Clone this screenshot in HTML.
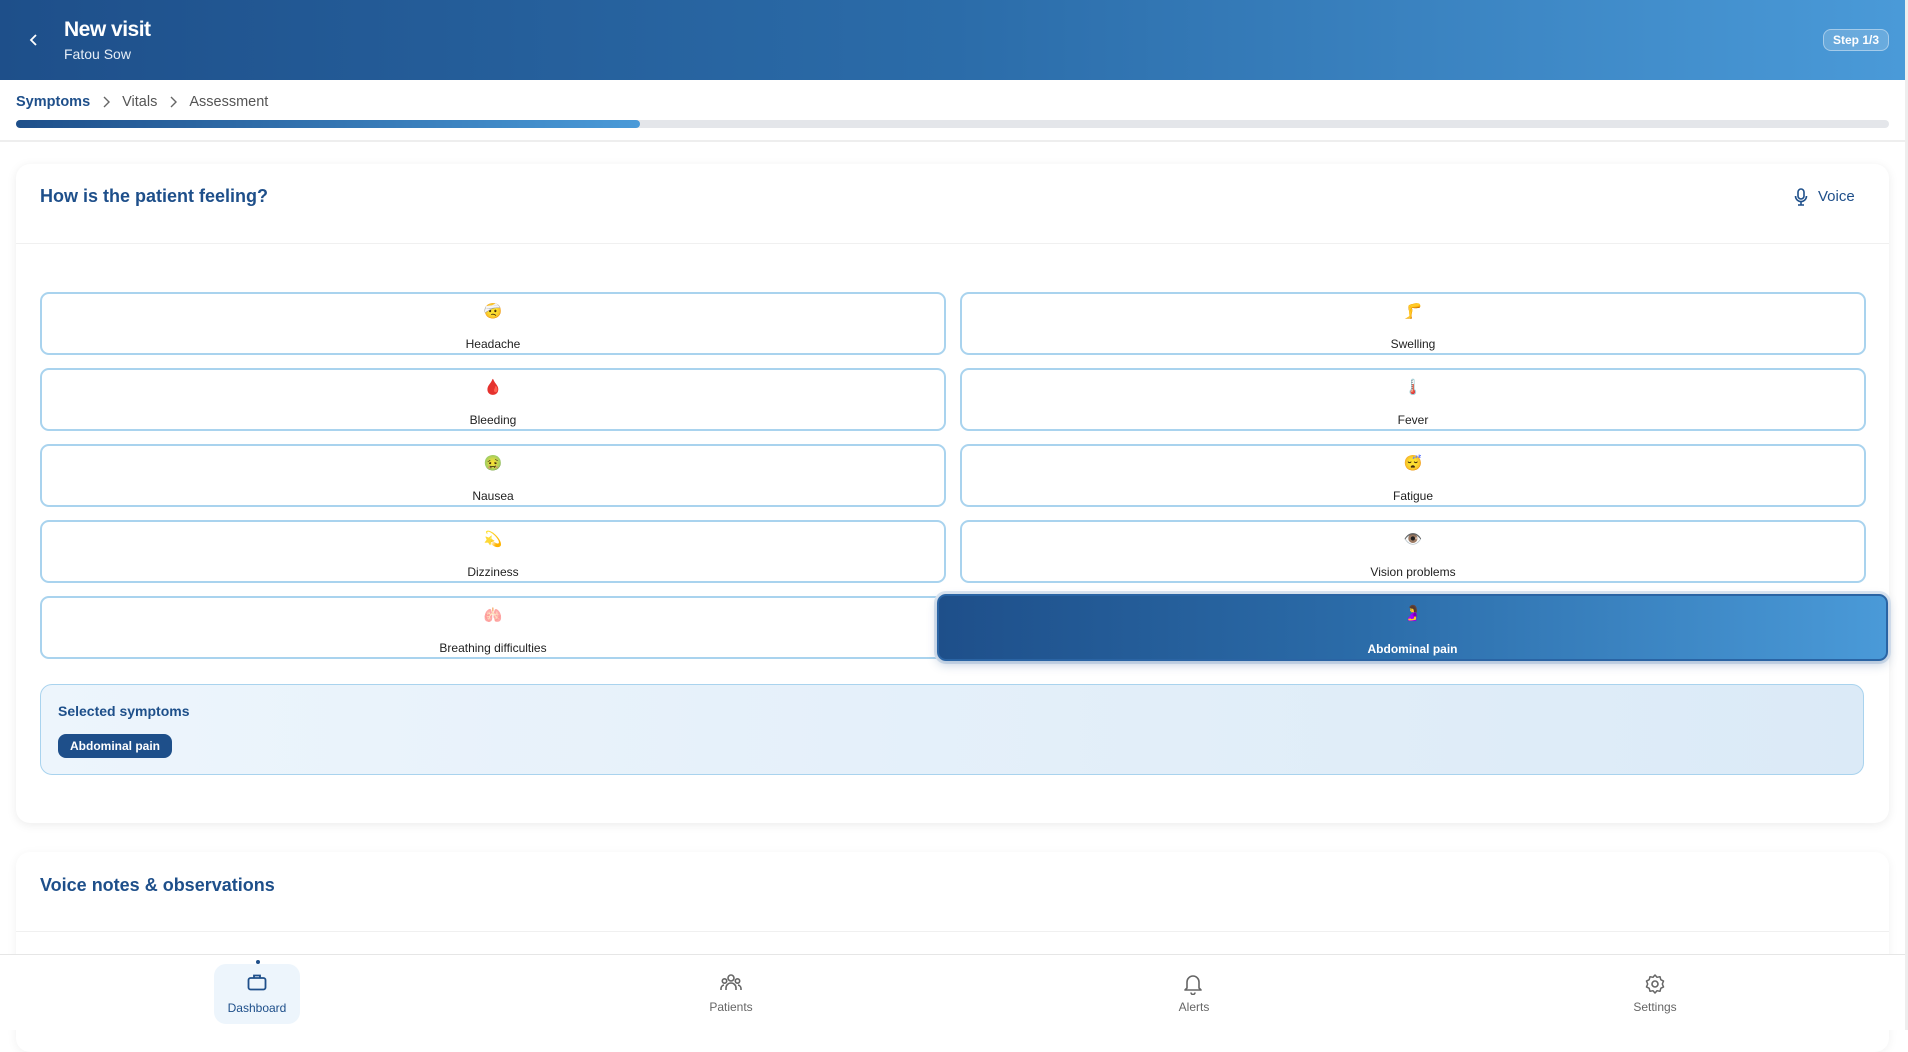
<!DOCTYPE html>
<html><head><meta charset="utf-8"><style>
*{box-sizing:border-box;margin:0;padding:0}
body{width:1908px;height:1030px;overflow:hidden;background:#fff;font-family:"Liberation Sans",sans-serif;position:relative}
.hdr{position:absolute;left:0;top:0;width:1905px;height:80px;background:linear-gradient(90deg,#1e4f8a,#2b6ca9 50%,#4a9ad8)}
.hdr .t{position:absolute;left:64px;top:18px;color:#fff;font-size:21px;font-weight:bold;letter-spacing:-0.5px}
.hdr .s{position:absolute;left:64px;top:46px;color:#e6eef7;font-size:14px}
.step{position:absolute;left:1823px;top:29px;width:66px;height:22px;border:1px solid rgba(255,255,255,.4);background:rgba(255,255,255,.18);border-radius:8px;color:#fff;font-size:12px;font-weight:bold;text-align:center;line-height:20px}
.bc{position:absolute;left:16px;top:94px;font-size:14.5px;color:#555;display:flex;align-items:center}
.bc b{color:#1e4f8a}
.bc svg{margin:0 12px 0 12px}
.pb{position:absolute;left:16px;top:120px;width:1873px;height:8px;border-radius:4px;background:#e4e6ea}
.pb div{width:624px;height:8px;border-radius:4px;background:linear-gradient(90deg,#1e4f8a,#4a9ad8)}
.sep{position:absolute;left:0;top:140px;width:1905px;height:2px;background:#eee}
.card{position:absolute;left:16px;top:164px;width:1873px;height:659px;background:#fff;border-radius:14px;box-shadow:0 2px 10px rgba(0,0,0,.08)}
.h2{position:absolute;font-size:18px;font-weight:bold;color:#1e4f8a}
.div{position:absolute;left:0;width:100%;height:1px;background:#f0f0f0}
.sym{position:absolute;width:906px;height:63px;border:2px solid #a9d3ee;border-radius:9px;background:#fff;text-align:center}
.sym .e{position:absolute;top:8px;left:0;width:100%;font-size:15px;line-height:20px}
.sym .l{position:absolute;top:43px;left:0;width:100%;font-size:12px;color:#222}
.sel{background:linear-gradient(90deg,#1e4f8a,#2b6ca9 45%,#4a9ad8);border-color:#2a64a4;box-shadow:0 4px 10px rgba(30,79,138,.25),0 0 0 3px #dde7f2}
.sel .l{color:#fff;font-weight:bold}
.panel{position:absolute;left:24px;top:520px;width:1824px;height:91px;border:1px solid #a9d3ee;border-radius:12px;background:linear-gradient(90deg,#edf5fc,#dbeaf7)}
.chip{position:absolute;left:17px;top:49px;width:114px;height:24px;border-radius:8px;background:#1e4f8a;color:#fff;font-size:12px;font-weight:bold;text-align:center;line-height:24px}
.card2{position:absolute;left:16px;top:852px;width:1873px;height:200px;background:#fff;border-radius:14px;box-shadow:0 2px 10px rgba(0,0,0,.06)}
.nav{position:absolute;left:0;top:954px;width:1905px;height:76px;background:#fff;border-top:1px solid #e6e6e6}
.ni{position:absolute;top:0;width:90px;text-align:center;font-size:12px;color:#666}
.ni svg{position:absolute;left:34px;top:18px}
.ni .lb{position:absolute;top:45px;left:0;width:100%}
</style></head><body>
<div class="hdr">
<svg style="position:absolute;left:28px;top:33px" width="12" height="14" viewBox="0 0 12 14"><path d="M8 2L3 7l5 5" stroke="#fff" stroke-width="1.8" fill="none"/></svg>
<div class="t">New visit</div><div class="s">Fatou Sow</div>
<div class="step">Step 1/3</div>
</div>
<div class="bc"><b>Symptoms</b><svg width="8" height="12" viewBox="0 0 8 12"><path d="M2 1l5 5-5 5" stroke="#666" stroke-width="1.4" fill="none"/></svg>Vitals<svg width="8" height="12" viewBox="0 0 8 12"><path d="M2 1l5 5-5 5" stroke="#666" stroke-width="1.4" fill="none"/></svg>Assessment</div>
<div class="pb"><div></div></div>
<div class="sep"></div>
<div class="card">
<div class="h2" style="left:24px;top:22px">How is the patient feeling?</div>
<svg style="position:absolute;left:1778px;top:24px" width="14" height="18" viewBox="0 0 14 18"><rect x="4" y="1" width="6" height="10" rx="3" stroke="#1e4f8a" stroke-width="1.6" fill="none"/><path d="M1.5 8a5.5 5.5 0 0011 0M7 13.5V17M4 17h6" stroke="#1e4f8a" stroke-width="1.6" fill="none"/></svg>
<div style="position:absolute;left:1802px;top:24px;font-size:15px;color:#1e4f8a">Voice</div>
<div class="div" style="top:79px"></div>
<div class="sym" style="left:24px;top:128px"><div class="e">🤕</div><div class="l">Headache</div></div>
<div class="sym" style="left:944px;top:128px"><div class="e">🦵</div><div class="l">Swelling</div></div>
<div class="sym" style="left:24px;top:204px"><div class="e">🩸</div><div class="l">Bleeding</div></div>
<div class="sym" style="left:944px;top:204px"><div class="e">🌡️</div><div class="l">Fever</div></div>
<div class="sym" style="left:24px;top:280px"><div class="e">🤢</div><div class="l">Nausea</div></div>
<div class="sym" style="left:944px;top:280px"><div class="e">😴</div><div class="l">Fatigue</div></div>
<div class="sym" style="left:24px;top:356px"><div class="e">💫</div><div class="l">Dizziness</div></div>
<div class="sym" style="left:944px;top:356px"><div class="e">👁️</div><div class="l">Vision problems</div></div>
<div class="sym" style="left:24px;top:432px"><div class="e">🫁</div><div class="l">Breathing difficulties</div></div>
<div class="sym sel" style="left:921px;top:430px;width:951px;height:67px"><div class="e" style="top:8px">🤰</div><div class="l" style="top:46px">Abdominal pain</div></div>
<div class="panel">
<div style="position:absolute;left:17px;top:18px;font-size:14px;font-weight:bold;color:#1e4f8a">Selected symptoms</div>
<div class="chip">Abdominal pain</div>
</div>
</div>
<div class="card2">
<div class="h2" style="left:24px;top:23px">Voice notes &amp; observations</div>
<div class="div" style="top:79px"></div>
</div>
<div class="nav">
<div style="position:absolute;left:256px;top:5px;width:4px;height:4px;border-radius:2px;background:#1e4f8a"></div>
<div class="ni" style="left:214px;top:9px;height:60px;width:86px;background:#edf5fc;border-radius:12px;color:#1e4f8a"><svg style="left:33px;top:9px" width="20" height="18" viewBox="0 0 20 18"><rect x="1.5" y="5" width="17" height="11.5" rx="2" stroke="#1e4f8a" stroke-width="1.8" fill="none"/><path d="M7 5V2.5h6V5" stroke="#1e4f8a" stroke-width="1.8" fill="none"/></svg><div class="lb" style="top:37px">Dashboard</div></div>
<div class="ni" style="left:686px"><svg width="22" height="20" viewBox="0 0 22 20"><circle cx="11" cy="5" r="3" stroke="#666" stroke-width="1.6" fill="none"/><circle cx="4.5" cy="8" r="2.2" stroke="#666" stroke-width="1.6" fill="none"/><circle cx="17.5" cy="8" r="2.2" stroke="#666" stroke-width="1.6" fill="none"/><path d="M6 17v-2a5 5 0 0110 0v2M1 17v-1.5a3.5 3.5 0 013-3.4M21 17v-1.5a3.5 3.5 0 00-3-3.4" stroke="#666" stroke-width="1.6" fill="none"/></svg><div class="lb">Patients</div></div>
<div class="ni" style="left:1149px"><svg width="20" height="22" viewBox="0 0 20 22"><path d="M4 15V9a6 6 0 0112 0v6l2 2H2z" stroke="#666" stroke-width="1.6" fill="none" stroke-linejoin="round"/><path d="M8 19.5a2 2 0 004 0" stroke="#666" stroke-width="1.6" fill="none"/></svg><div class="lb">Alerts</div></div>
<div class="ni" style="left:1610px"><svg width="22" height="22" viewBox="0 0 22 22"><circle cx="11" cy="11" r="3" stroke="#666" stroke-width="1.6" fill="none"/><path d="M11 2l2 2.3 3-.6.8 3 2.7 1.4-1.2 2.9 1.2 2.9-2.7 1.4-.8 3-3-.6L11 20l-2-2.3-3 .6-.8-3-2.7-1.4L3.7 11 2.5 8.1l2.7-1.4.8-3 3 .6z" stroke="#666" stroke-width="1.5" fill="none" stroke-linejoin="round"/></svg><div class="lb">Settings</div></div>
</div>
<div style="position:absolute;left:1905px;top:0;width:3px;height:1030px;background:#eee"></div>
</body></html>
